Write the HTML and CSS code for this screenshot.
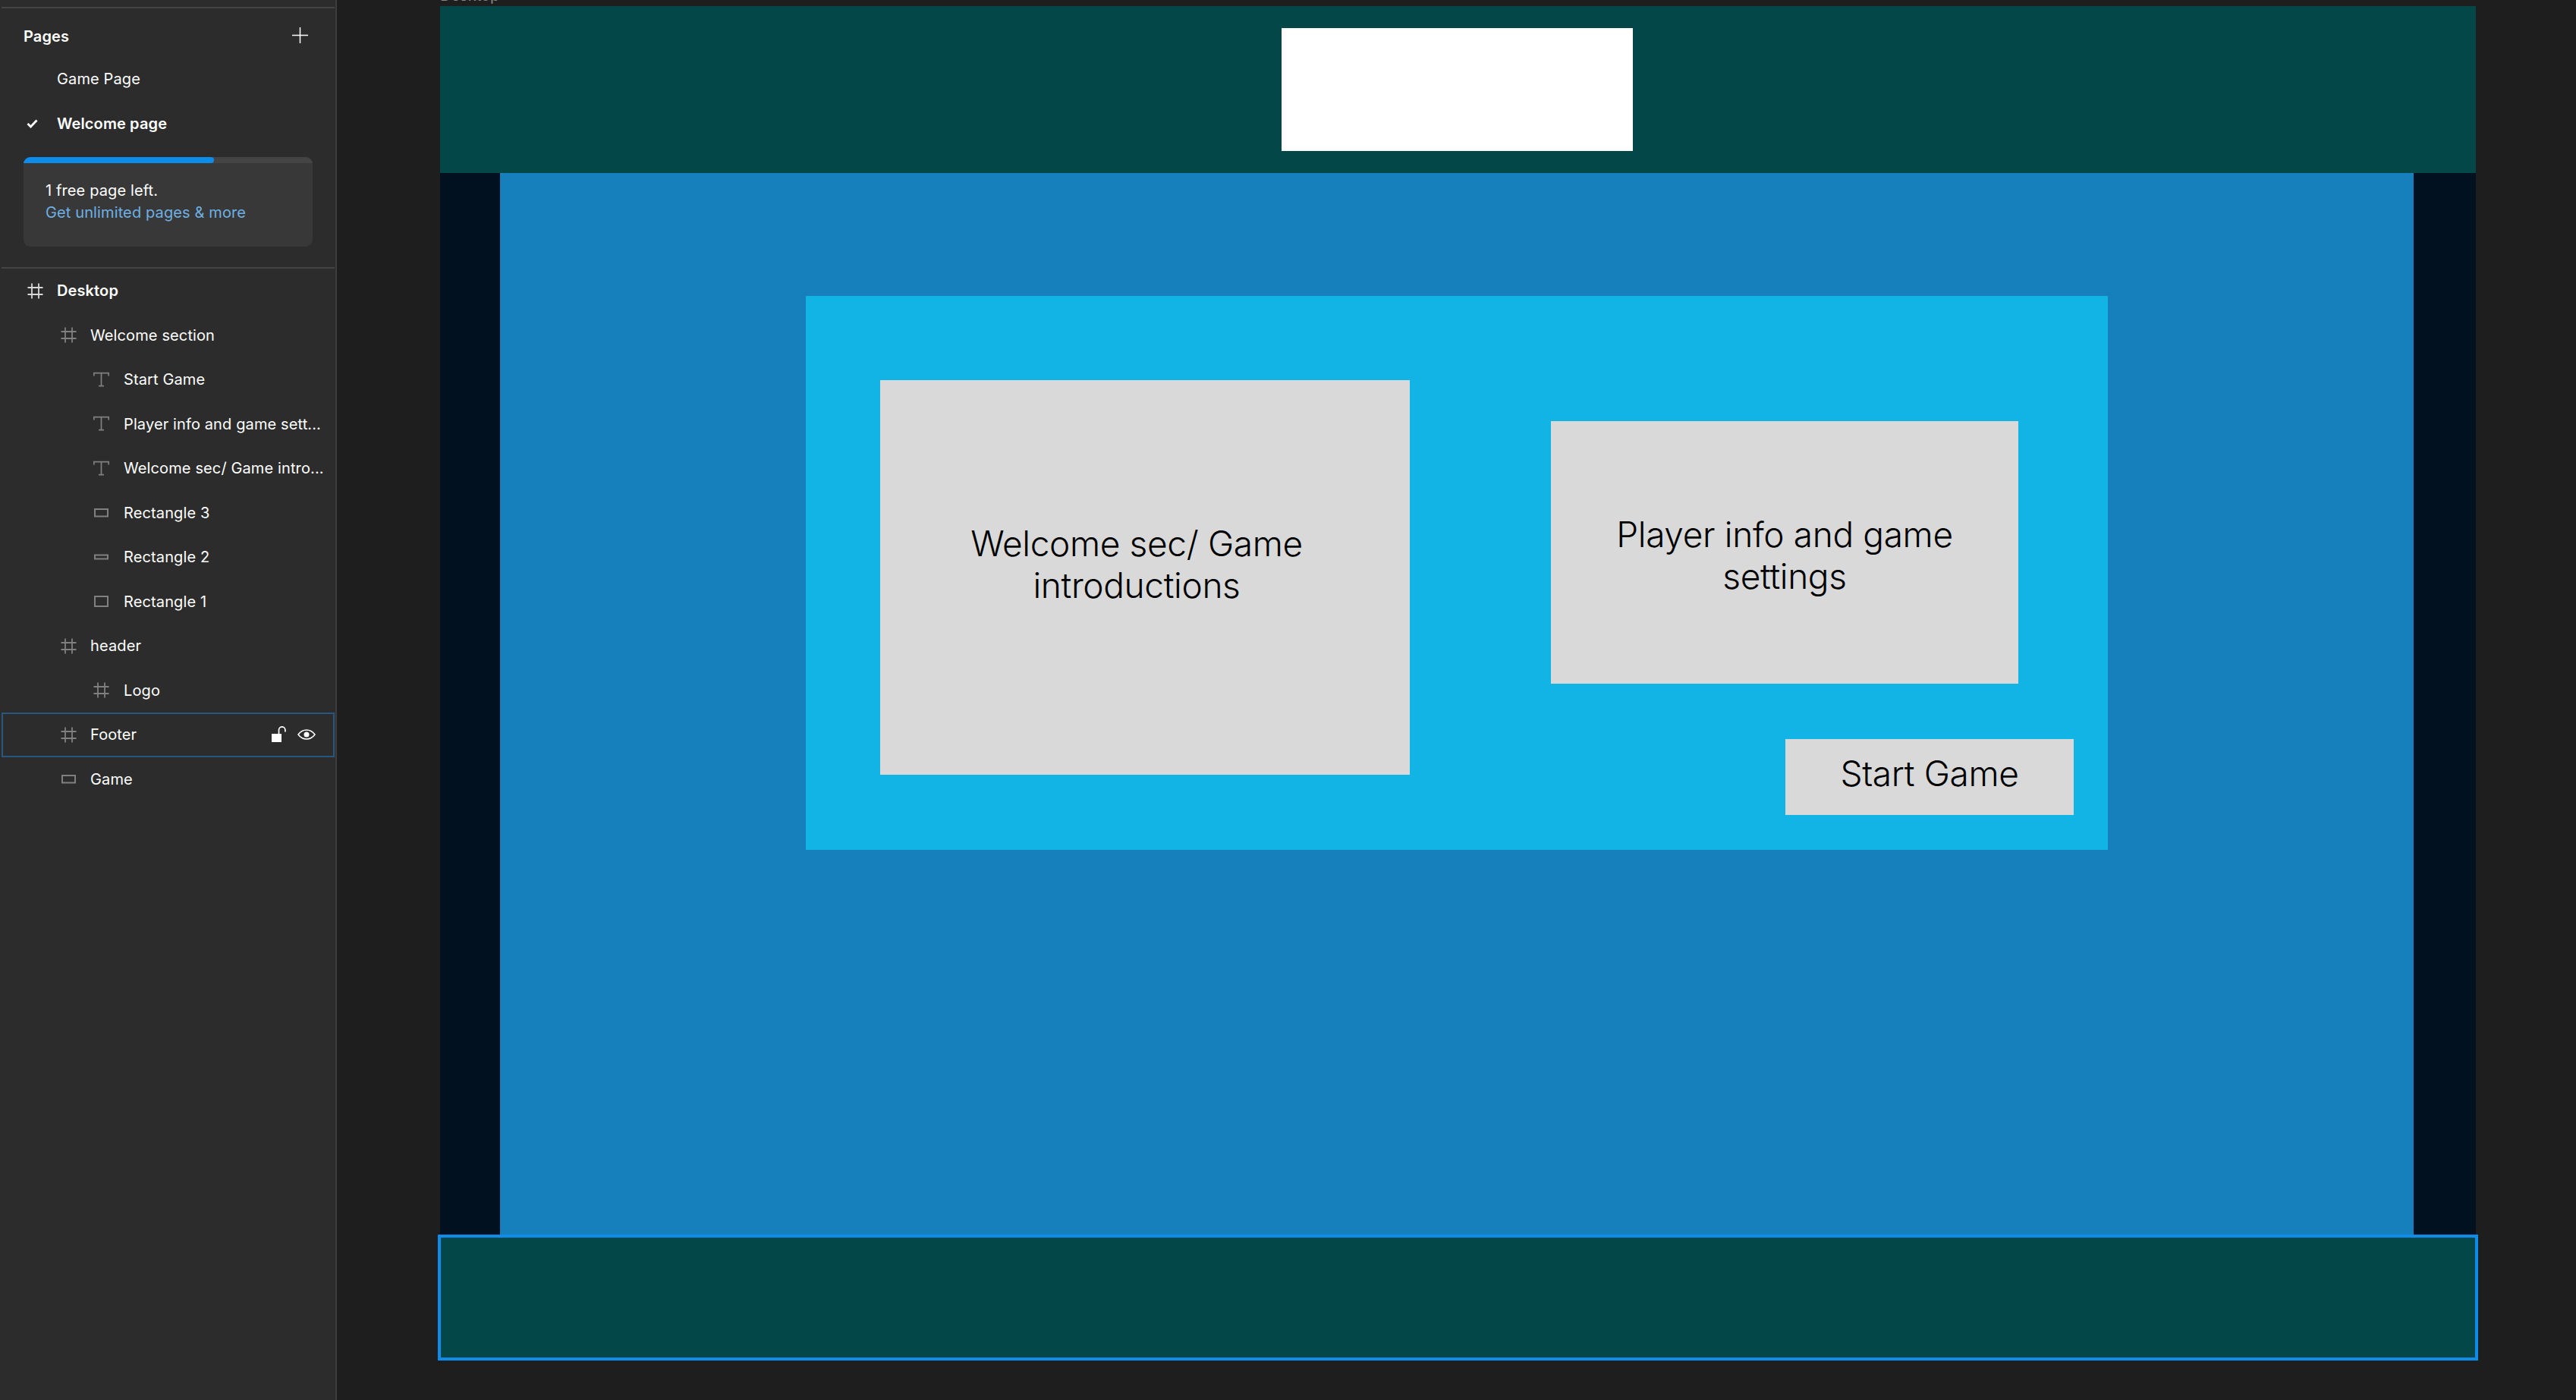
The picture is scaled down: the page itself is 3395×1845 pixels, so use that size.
FILE: index.html
```html
<!DOCTYPE html>
<html lang="en">
<head>
<meta charset="utf-8">
<title>Welcome page</title>
<link rel="stylesheet" href="styles.css">
</head>
<body>
<svg class="defs" width="0" height="0" aria-hidden="true">
  <symbol id="i-frame" viewBox="0 0 21 21"><path d="M6 .5v20M15 .5v20M.5 6h20M.5 15h20" fill="none" stroke="currentColor" stroke-width="1.8"/></symbol>
  <symbol id="i-text" viewBox="0 0 21 20"><path d="M.8 5V1.2h19.4V5M10.500 1.200v17M7 18.200h7" fill="none" stroke="currentColor" stroke-width="1.7"/></symbol>
</svg>
<div class="app">
  <aside class="sidebar">
    <div class="rule rule-top"></div>
    <div class="pages-head">
      <span>Pages</span>
      <svg class="plus" viewBox="0 0 21 21"><path d="M10.500 0v21M0 10.500h21" stroke="#fff" stroke-width="1.500"/></svg>
    </div>
    <div class="row page"><span class="label">Game Page</span></div>
    <div class="row page current">
      <svg class="check" viewBox="0 0 15 12"><path d="M1.500 6l4 4 8-8.500" fill="none" stroke="#fff" stroke-width="2.800"/></svg>
      <span class="label">Welcome page</span>
    </div>
    <div class="banner">
      <div class="track"><div class="fill"></div></div>
      <div class="banner-text">
        <div>1 free page left.</div>
        <div class="link">Get unlimited pages &amp; more</div>
      </div>
    </div>
    <div class="rule rule-mid"></div>
    <div class="layers">
      <div class="row d0 current"><svg class="ic ic-bright"><use href="#i-frame"/></svg><span class="label">Desktop</span></div>
      <div class="row d1"><svg class="ic"><use href="#i-frame"/></svg><span class="label">Welcome section</span></div>
      <div class="row d2"><svg class="ic"><use href="#i-text"/></svg><span class="label">Start Game</span></div>
      <div class="row d2"><svg class="ic"><use href="#i-text"/></svg><span class="label">Player info and game sett...</span></div>
      <div class="row d2"><svg class="ic"><use href="#i-text"/></svg><span class="label">Welcome sec/ Game intro...</span></div>
      <div class="row d2"><svg class="ic" viewBox="0 0 21 21"><rect x="2" y="6" width="17" height="9.500" fill="none" stroke="currentColor" stroke-width="2"/></svg><span class="label">Rectangle 3</span></div>
      <div class="row d2"><svg class="ic" viewBox="0 0 21 21"><rect x="2" y="7.500" width="17" height="5" fill="none" stroke="currentColor" stroke-width="2"/></svg><span class="label">Rectangle 2</span></div>
      <div class="row d2"><svg class="ic" viewBox="0 0 21 21"><rect x="2" y="4" width="17" height="13" fill="none" stroke="currentColor" stroke-width="2"/></svg><span class="label">Rectangle 1</span></div>
      <div class="row d1"><svg class="ic"><use href="#i-frame"/></svg><span class="label">header</span></div>
      <div class="row d2"><svg class="ic"><use href="#i-frame"/></svg><span class="label">Logo</span></div>
      <div class="row d1 selected">
        <svg class="ic"><use href="#i-frame"/></svg><span class="label">Footer</span>
        <span class="row-tools">
          <svg class="lock" viewBox="0 0 20 21"><path d="M0 10h13v11H0z" fill="#fff"/><path d="M9.500 10V5a4.200 4.200 0 0 1 8.400 0v2.500" fill="none" stroke="#fff" stroke-width="1.700"/></svg>
          <svg class="eye" viewBox="0 0 24 14"><path d="M1 7c3-4 6.500-6 11-6s8 2 11 6c-3 4-6.500 6-11 6S4 11 1 7z" fill="none" stroke="#fff" stroke-width="1.500"/><circle cx="12" cy="7" r="3.500" fill="#fff"/></svg>
        </span>
      </div>
      <div class="row d1"><svg class="ic" viewBox="0 0 21 21"><rect x="2" y="6" width="17" height="9.500" fill="none" stroke="currentColor" stroke-width="2"/></svg><span class="label">Game</span></div>
    </div>
  </aside>
  <main class="canvas">
    <div class="frame-name">Desktop</div>
    <div class="frame">
      <header class="head"><div class="logo"></div></header>
      <div class="game">
        <section class="stage">
          <div class="welcome">
            <div class="card card-intro"><p>Welcome sec/ Game<br>introductions</p></div>
            <div class="card card-player"><p>Player info and game<br>settings</p></div>
            <div class="card card-start"><p>Start Game</p></div>
          </div>
        </section>
      </div>
      <footer class="foot"></footer>
    </div>
  </main>
</div>
</body>
</html>
```

FILE: styles.css
```css
* { box-sizing: border-box; }
html, body { margin: 0; padding: 0; height: 100%; }
body { font-family: Inter, "Liberation Sans", sans-serif; background: #1e1e1e; overflow: hidden; }
.defs { position: absolute; }
.app { display: flex; width: 3395px; height: 1845px; }

.sidebar { width: 444px; flex: none; background: #2c2c2c; border-right: 2px solid #3d3d3d; color: #fff; font-size: 20px; letter-spacing: .12px; display: flex; flex-direction: column; }
.rule { height: 2px; margin: 0 1px 0 2px; background: #444; flex: none; }
.rule-top { margin-top: 9px; }
.rule-mid { margin-top: 27px; }
.pages-head { height: 55px; margin-top: 9px; padding: 0 36px 0 31px; display: flex; align-items: center; justify-content: space-between; font-weight: 600; }
.plus { width: 21px; height: 21px; margin-top: -2px; }

.row { height: 58.5px; display: flex; align-items: center; position: relative; white-space: nowrap; flex: none; }
.label { display: block; }
.current .label { font-weight: 600; }
.page { padding-left: 75px; }
.check { position: absolute; left: 35px; top: 23px; width: 15px; height: 12px; }
.banner { margin: 15px 30px 0 31px; height: 118px; border-radius: 9px; background: #383838; overflow: hidden; flex: none; }
.track { height: 8px; background: #444; }
.fill { height: 8px; width: 251px; background: #0d8ce9; border-radius: 0 4px 4px 0; }
.banner-text { padding: 22px 0 0 29px; line-height: 29px; }
.link { color: #6fb0e4; }

.ic { width: 21px; height: 21px; color: #808080; position: absolute; top: 18.5px; }
.ic-bright { color: #d8d8d8; }
.d0 { padding-left: 75px; }
.d0 .ic { left: 36px; }
.d1 { padding-left: 119px; }
.d1 .ic { left: 80px; }
.d2 { padding-left: 163px; }
.d2 .ic { left: 123px; }
.selected { margin: 0 1px 0 2px; padding-left: 115px; border: 2px solid #285882; }
.selected .ic { left: 76px; top: 16.5px; }
.row-tools { position: absolute; right: 23px; top: 16px; display: flex; align-items: center; gap: 14px; }
.lock { width: 20px; height: 21px; }
.eye { width: 24px; height: 14px; }

.canvas { flex: 1; position: relative; padding: 8px 0 0 136px; overflow: hidden; }
.frame-name { position: absolute; left: 136px; top: -18px; font-size: 20px; color: #8a8a8a; }
.frame { width: 2683px; display: flex; flex-direction: column; }
.head { height: 220px; background: #044748; display: flex; justify-content: center; padding: 29px 3px 0 0; }
.logo { width: 463px; height: 162px; background: #fff; }
.game { height: 1399px; background: #011120; padding: 0 82px 0 79px; }
.stage { height: 100%; background: #1580bb; padding: 162px 0 0 403px; }
.welcome { position: relative; width: 1716px; height: 730px; background: #12b4e5; }
.card { position: absolute; background: #d9d9d9; color: #000; font-size: 46px; font-weight: 350; letter-spacing: -.35px; line-height: 55px; display: flex; justify-content: center; }
.card p { margin: 0; text-align: center; }
.card-intro { left: 98px; top: 111px; width: 698px; height: 520px; padding: 188px 22px 0 0; }
.card-player { left: 982px; top: 165px; width: 616px; height: 346px; padding: 122px 0 0; }
.card-start { left: 1291px; top: 584px; width: 380px; height: 100px; padding-top: 18px; }
.foot { height: 158px; margin: 4px 1px 0; background: #044748; outline: 4px solid #0d8ce9; }
```
